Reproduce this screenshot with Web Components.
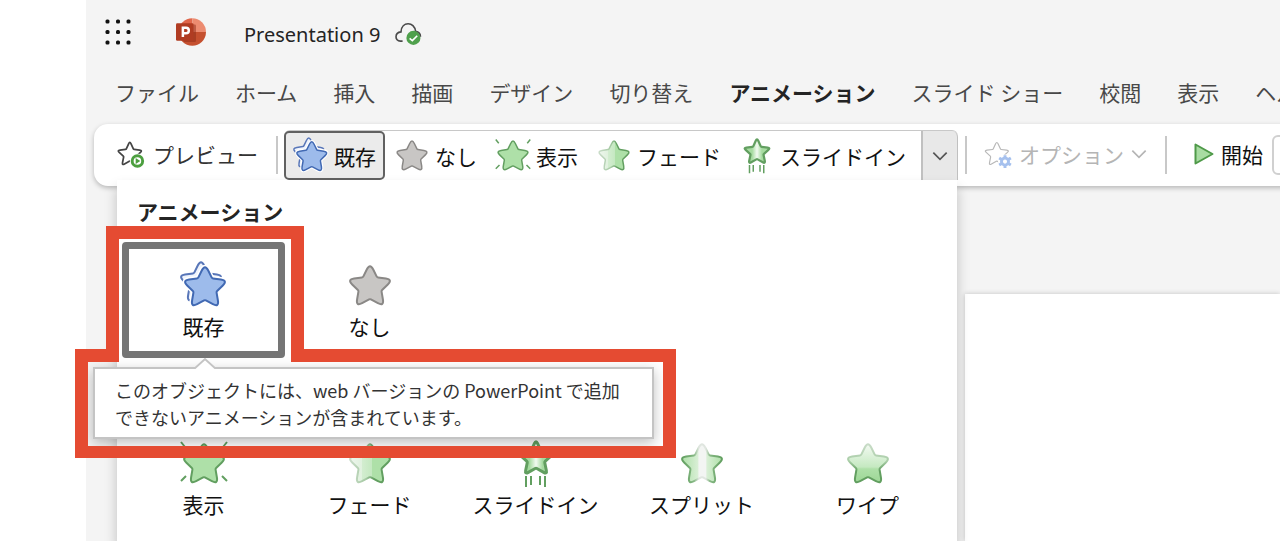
<!DOCTYPE html>
<html lang="ja">
<head>
<meta charset="utf-8">
<meta name="viewport" content="width=device-width, initial-scale=1">
<title>Presentation 9</title>
<style>
  body {
    margin: 0;
    background: #fff;
    color: #242424;
    font-family: "Noto Sans CJK JP", sans-serif;
    font-size: 21px;
  }
</style>
</head>
<body>
<slide-app></slide-app>

<script>
// Path of a five-pointed star with rounded tips.
function starPath(cx, cy, outer, inner, round) {
  const pts = [];
  for (let i = 0; i < 10; i++) {
    const r = i % 2 ? inner : outer;
    const a = -Math.PI / 2 + (i * Math.PI) / 5;
    pts.push([cx + r * Math.cos(a), cy + r * Math.sin(a)]);
  }
  const toward = (p, q, d) => {
    const len = Math.hypot(q[0] - p[0], q[1] - p[1]);
    return [p[0] + ((q[0] - p[0]) * d) / len, p[1] + ((q[1] - p[1]) * d) / len];
  };
  const f = (p) => p.map((n) => n.toFixed(2)).join(" ");
  let d = "";
  pts.forEach((p, i) => {
    const cut = i % 2 ? 1 : round;
    const a = toward(p, pts[(i + 9) % 10], cut);
    const b = toward(p, pts[(i + 1) % 10], cut);
    d += `${i ? "L" : "M"}${f(a)} Q${f(p)} ${f(b)} `;
  });
  return d + "Z";
}

const STAR = starPath(24, 25, 24, 12, 7);
const SMALL_STAR = starPath(24, 19, 19, 9, 4);
const GREEN = "#629f60";
const LIGHT = "#aee0a8";

const gradient = (id, dir, stops) => `
  <linearGradient id="${id}" ${dir}>
    ${stops.map(([o, c]) => `<stop offset="${o}" stop-color="${c}"/>`).join("")}
  </linearGradient>`;

const ICONS = {
  existing: `
    <path d="${STAR}" transform="translate(-3 -4)" fill="#eef3fc" stroke="#5876b8" stroke-width="2"/>
    <path d="${STAR}" transform="translate(1 1)" fill="none" stroke="#fff" stroke-width="5"/>
    <path d="${STAR}" transform="translate(1 1)" fill="#9dbbeb" stroke="#4169b3" stroke-width="2"/>`,
  none: `<path d="${STAR}" fill="#c8c6c4" stroke="#8a8886" stroke-width="2"/>`,
  appear: `
    <path d="${STAR}" fill="${LIGHT}" stroke="${GREEN}" stroke-width="2"/>
    <path d="M1 2l4 5M47 2l-4 5M1 41l5-5M47 41l-5-5" fill="none" stroke="${GREEN}" stroke-width="2"/>`,
  fade: `
    <defs>
      ${gradient("f", "", [[0, "#eef6ed"], [0.3, "#e0f1de"], [0.3, "#d3edd0"], [0.55, "#c4e8c0"], [0.55, LIGHT], [1, LIGHT]])}
      ${gradient("s", "", [[0, "#c9dcc8"], [0.4, "#a5c9a3"], [0.6, GREEN], [1, GREEN]])}
    </defs>
    <path d="${STAR}" fill="url(#f)" stroke="url(#s)" stroke-width="2"/>`,
  flyin: `
    <defs>${gradient("f", "", [[0, LIGHT], [0.3, "#a5db9f"], [0.5, "#f2faf1"], [0.7, "#a5db9f"], [1, LIGHT]])}</defs>
    <path d="${SMALL_STAR}" fill="url(#f)" stroke="${GREEN}" stroke-width="3"/>
    <path d="M14 36v11M19 36v9M28 36v9M33 36v11" stroke="${GREEN}" stroke-width="2"/>`,
  split: `
    <defs>
      ${gradient("f", "", [[0, LIGHT], [0.4, "#d9efd6"], [0.42, "#f3f5f3"], [0.6, "#f3f5f3"], [0.62, "#d9efd6"], [1, LIGHT]])}
      ${gradient("s", "", [[0, GREEN], [0.3, "#86b884"], [0.42, "#e0e6e0"], [0.6, "#e0e6e0"], [0.7, "#86b884"], [1, GREEN]])}
    </defs>
    <path d="${STAR}" fill="url(#f)" stroke="url(#s)" stroke-width="2"/>`,
  wipe: `
    <defs>
      ${gradient("f", 'x2="0" y2="1"', [[0, "#f4faf3"], [0.6, "#c5e9c1"], [0.65, LIGHT], [1, "#9dd796"]])}
      ${gradient("s", 'x2="0" y2="1"', [[0, "#c9dcc8"], [0.45, "#a9cda7"], [0.7, GREEN], [1, GREEN]])}
    </defs>
    <path d="${STAR}" fill="url(#f)" stroke="url(#s)" stroke-width="2"/>`,
  preview: `
    <path d="${starPath(22, 25, 23, 11, 5)}" fill="#fff" stroke="#444" stroke-width="3"/>
    <circle cx="35" cy="36" r="13" fill="#fff"/>
    <circle cx="35" cy="36" r="9" fill="#fff" stroke="#4c9f3f" stroke-width="5"/>
    <path d="M32 31l8 5-8 5z" fill="#4c9f3f"/>`,
  options: `
    <path d="${starPath(22, 25, 23, 11, 5)}" fill="#fff" stroke="#b8b8b8" stroke-width="2"/>
    <circle cx="36" cy="37" r="12" fill="#fff"/>
    <circle cx="36" cy="37" r="6" fill="none" stroke="#a6c1ee" stroke-width="5"/>
    <path d="M36 26v5M36 43v5M26 31l5 3M41 40l5 3M46 31l-5 3M31 40l-5 3" stroke="#a6c1ee" stroke-width="5"/>`,
  play: `<path d="M9 5v38L43 24z" fill="#a8dca2" stroke="#4f9a49" stroke-width="4" stroke-linejoin="round"/>`,
  chevron: `<path d="M4 14l20 20 20-20" fill="none" stroke="currentColor" stroke-width="5"/>`,
  launcher: [3, 24, 45].map((y) => [3, 24, 45].map((x) =>
    `<rect x="${x - 4}" y="${y - 4}" width="8" height="8" rx="3" fill="#111"/>`).join("")).join(""),
  cloud: `
    <path d="M14 39H10C-1 39-1 23 11 22C12 2 36 2 38 21C46 22 47 28 47 31" fill="none" stroke="#4a4a4a" stroke-width="3"/>
    <circle cx="34" cy="33" r="13" fill="#4fa04c"/>
    <path d="M27 34l5 4 9-9" fill="none" stroke="#fff" stroke-width="3"/>`,
  powerpoint: `
    <path d="M26 2a22 22 0 0 0-22 22h22z" fill="#e0664a"/>
    <path d="M26 2a22 22 0 0 1 22 22l-11 4-11-4z" fill="#ec8b70"/>
    <path d="M4 24a22 22 0 0 0 44 0z" fill="#c5502f"/>
    <rect x="12" y="12" width="20" height="28" rx="2" fill="#8e2c17" opacity=".5"/>
    <rect x="0" y="10" width="28" height="28" rx="2" fill="#b03c22"/>
    <path d="M11 32V17h5a4 4 0 0 1 0 9h-5" fill="none" stroke="#fff" stroke-width="4"/>`
};

class AppIcon extends HTMLElement {
  connectedCallback() {
    const root = this.shadowRoot || this.attachShadow({ mode: "open" });
    root.innerHTML = `
      <style>
        :host {
          display: block;
          flex: none;
          width: var(--icon-size, 36px);
          height: var(--icon-size, 36px);
        }
        svg {
          display: block;
          width: 100%;
          height: 100%;
          overflow: visible;
        }
      </style>
      <svg viewBox="0 0 48 48" aria-hidden="true">${ICONS[this.getAttribute("name")] || ""}</svg>
    `;
  }
}

class TitleBar extends HTMLElement {
  connectedCallback() {
    const root = this.shadowRoot || this.attachShadow({ mode: "open" });
    root.innerHTML = `
      <style>
        :host {
          display: flex;
          align-items: center;
          height: 63px;
          padding-left: 20px;
        }
        button {
          padding: 0;
          border: 0;
          background: none;
        }
        .launcher { --icon-size: 24px; }
        .logo {
          --icon-size: 30px;
          margin-left: 46px;
        }
        h1 {
          margin: 6px 15px 0 38px;
          font: 400 20px/30px "Noto Sans", sans-serif;
          white-space: nowrap;
        }
        .cloud {
          --icon-size: 26px;
          margin-top: 3px;
        }
      </style>
      <button class="launcher" aria-label="アプリ起動ツール"><app-icon name="launcher"></app-icon></button>
      <app-icon class="logo" name="powerpoint"></app-icon>
      <h1><slot></slot></h1>
      <app-icon class="cloud" name="cloud"></app-icon>
    `;
  }
}

class RibbonTabs extends HTMLElement {
  connectedCallback() {
    const tabs = ["ファイル", "ホーム", "挿入", "描画", "デザイン", "切り替え", "アニメーション",
      "スライド ショー", "校閲", "表示", "ヘルプ"];
    const root = this.shadowRoot || this.attachShadow({ mode: "open" });
    root.innerHTML = `
      <style>
        :host {
          display: block;
          overflow: hidden;
        }
        nav {
          display: flex;
          gap: 36px;
          padding: 0 0 3px 29px;
        }
        button {
          flex: none;
          padding: 0;
          border: 0;
          background: none;
          color: #484848;
          font: inherit;
          line-height: 58px;
          white-space: nowrap;
        }
        button[aria-selected="true"] {
          color: #242424;
          font-weight: 700;
        }
      </style>
      <nav role="tablist">
        ${tabs.map((t) => `<button role="tab" aria-selected="${t === "アニメーション"}">${t}</button>`).join("")}
      </nav>
    `;
  }
}

class GalleryItem extends HTMLElement {
  connectedCallback() {
    const root = this.shadowRoot || this.attachShadow({ mode: "open" });
    root.innerHTML = `
      <style>
        :host { display: flex; }
        button {
          display: flex;
          align-items: center;
          gap: 5px;
          padding: 0 8px;
          border: 1px solid transparent;
          border-radius: 5px;
          background: none;
          color: #111;
          font: inherit;
          white-space: nowrap;
        }
        :host([selected]) button {
          padding: 0 7px;
          border: 2px solid #616161;
          background: #ebebeb;
        }
      </style>
      <button><app-icon name="${this.getAttribute("icon")}"></app-icon><slot></slot></button>
    `;
  }
}

class RibbonBar extends HTMLElement {
  connectedCallback() {
    const root = this.shadowRoot || this.attachShadow({ mode: "open" });
    root.innerHTML = `
      <style>
        :host {
          display: flex;
          height: 62px;
          margin: 0 -20px 0 8px;
          padding-left: 23px;
          border-radius: 14px;
          background: #fff;
          box-shadow: 0 2px 5px rgba(0, 0, 0, 0.25);
          box-sizing: border-box;
          line-height: 30px;
          white-space: nowrap;
        }
        .tool, label {
          display: flex;
          flex: none;
          align-items: center;
          gap: 8px;
          padding: 0 0 2px;
          border: 0;
          background: none;
          color: #333;
          font: inherit;
        }
        .tool { --icon-size: 28px; }
        .tool:disabled {
          gap: 7px;
          color: #b5b5b5;
        }
        .small { --icon-size: 16px; }
        i {
          flex: none;
          width: 2px;
          height: 38px;
          margin-top: 12px;
          background: #c8c8c8;
        }
        .gallery {
          display: flex;
          flex: none;
          height: 50px;
          margin: 6px 7px 0 6px;
          border-top: 1px solid #c8c8c8;
          border-radius: 6px;
          box-sizing: border-box;
        }
        .more {
          --icon-size: 16px;
          display: flex;
          align-items: center;
          justify-content: center;
          width: 37px;
          margin-left: 6px;
          padding: 0;
          border: 1px solid #c0c0c0;
          border-width: 0 1px 0 2px;
          border-radius: 0 6px 0 0;
          background: #e8e8e8;
          color: #555;
        }
        label {
          --icon-size: 24px;
          gap: 6px;
          margin: 0 9px 0 24px;
          color: #111;
        }
        select {
          width: 160px;
          height: 40px;
          margin-top: 11px;
          border: 2px solid #d0d0d0;
          border-radius: 6px;
          background: #fff;
          font: inherit;
        }
      </style>
      <button class="tool"><app-icon name="preview"></app-icon>プレビュー</button>
      <i style="margin-left: 18px"></i>
      <div class="gallery">
        <gallery-item icon="existing" selected>既存</gallery-item>
        <gallery-item icon="none">なし</gallery-item>
        <gallery-item icon="appear">表示</gallery-item>
        <gallery-item icon="fade">フェード</gallery-item>
        <gallery-item icon="flyin">スライドイン</gallery-item>
        <button class="more" aria-label="アニメーションの一覧" aria-expanded="true"><app-icon name="chevron"></app-icon></button>
      </div>
      <i style="margin-right: 17px"></i>
      <button class="tool" disabled>
        <app-icon name="options"></app-icon>オプション<app-icon class="small" name="chevron"></app-icon>
      </button>
      <i style="margin-left: 18px"></i>
      <label for="start"><app-icon name="play"></app-icon>開始</label>
      <select id="start"></select>
    `;
  }
}

class EffectTile extends HTMLElement {
  connectedCallback() {
    const root = this.shadowRoot || this.attachShadow({ mode: "open" });
    root.innerHTML = `
      <style>
        :host {
          display: block;
          position: relative;
        }
        button {
          --icon-size: 48px;
          display: flex;
          flex-direction: column;
          align-items: center;
          gap: 2px;
          width: 100%;
          height: 116px;
          padding: 13px 0 0;
          border: 7px solid transparent;
          border-radius: 4px;
          background: none;
          color: #111;
          font: inherit;
          line-height: 28px;
          white-space: nowrap;
        }
        :host([selected]) button { border-color: #757575; }
      </style>
      <button><app-icon name="${this.getAttribute("icon")}"></app-icon><slot></slot></button>
      <slot name="tip"></slot>
    `;
  }
}

class EffectTip extends HTMLElement {
  connectedCallback() {
    const root = this.shadowRoot || this.attachShadow({ mode: "open" });
    root.innerHTML = `
      <style>
        :host {
          position: absolute;
          z-index: 2;
          top: 125px;
          left: -29px;
          padding: 8px 32px 6px 20px;
          border: 2px solid #c4c4c4;
          background: #fff;
          box-shadow: 0 4px 12px rgba(0, 0, 0, 0.25);
          color: #333;
          font-size: 18px;
          line-height: 27px;
          white-space: nowrap;
        }
        svg {
          position: absolute;
          top: -12px;
          left: 99px;
        }
      </style>
      <svg width="22" height="12" viewBox="0 0 22 12" aria-hidden="true">
        <path d="M0 12L11 2L22 12" fill="#fff" stroke="#c4c4c4" stroke-width="2"/>
      </svg>
      <slot></slot>
    `;
  }
}

class EffectPanel extends HTMLElement {
  connectedCallback() {
    const root = this.shadowRoot || this.attachShadow({ mode: "open" });
    root.innerHTML = `
      <style>
        :host {
          display: block;
          padding: 14px 8px 0 5px;
          background: #fff;
          box-shadow: 0 8px 12px rgba(0, 0, 0, 0.22);
        }
        h2 {
          margin: 0 0 14px 15px;
          font-size: 21px;
          line-height: 34px;
        }
        .row {
          display: grid;
          grid-template-columns: repeat(5, 163px);
          gap: 3px;
        }
        .row + .row { margin-top: 62px; }
      </style>
      <h2>アニメーション</h2>
      <div class="row">
        <effect-tile icon="existing" selected>既存
          <effect-tip slot="tip" role="tooltip">このオブジェクトには、web バージョンの PowerPoint で追加<br>できないアニメーションが含まれています。</effect-tip>
        </effect-tile>
        <effect-tile icon="none">なし</effect-tile>
      </div>
      <div class="row">
        <effect-tile icon="appear">表示</effect-tile>
        <effect-tile icon="fade">フェード</effect-tile>
        <effect-tile icon="flyin">スライドイン</effect-tile>
        <effect-tile icon="split">スプリット</effect-tile>
        <effect-tile icon="wipe">ワイプ</effect-tile>
      </div>
    `;
  }
}

// Red frame round the selected effect and its tooltip.
class CalloutFrame extends HTMLElement {
  connectedCallback() {
    const root = this.shadowRoot || this.attachShadow({ mode: "open" });
    root.innerHTML = `
      <style>
        :host {
          display: block;
          pointer-events: none;
        }
        svg { display: block; }
      </style>
      <svg width="601" height="232" viewBox="0 0 601 232" aria-hidden="true">
        <path fill="#e54b32" fill-rule="evenodd"
          d="M31 0H229V123H601V232H0V123H31Z M44 13V136H13V220H588V136H216V13Z"/>
      </svg>
    `;
  }
}

class SlideApp extends HTMLElement {
  connectedCallback() {
    const root = this.shadowRoot || this.attachShadow({ mode: "open" });
    root.innerHTML = `
      <style>
        :host {
          display: block;
          overflow: hidden;
        }
        .window {
          display: flex;
          flex-direction: column;
          position: relative;
          min-height: 100vh;
          margin-left: 86px;
          background: #f4f4f4;
        }
        .stage {
          display: flex;
          flex: 1;
          padding: 108px 0 0 879px;
        }
        .slide {
          flex: 1;
          background: #fff;
          box-shadow: 0 0 5px rgba(0, 0, 0, 0.2);
        }
        effect-panel {
          position: absolute;
          top: 180px;
          bottom: 0;
          left: 31px;
        }
        callout-frame {
          position: absolute;
          top: 226px;
          left: -11px;
          z-index: 3;
        }
      </style>
      <div class="window">
        <title-bar>Presentation 9</title-bar>
        <ribbon-tabs></ribbon-tabs>
        <ribbon-bar></ribbon-bar>
        <main class="stage"><div class="slide"></div></main>
        <effect-panel></effect-panel>
        <callout-frame></callout-frame>
      </div>
    `;
  }
}

customElements.define("app-icon", AppIcon);
customElements.define("title-bar", TitleBar);
customElements.define("ribbon-tabs", RibbonTabs);
customElements.define("gallery-item", GalleryItem);
customElements.define("ribbon-bar", RibbonBar);
customElements.define("effect-tile", EffectTile);
customElements.define("effect-tip", EffectTip);
customElements.define("effect-panel", EffectPanel);
customElements.define("callout-frame", CalloutFrame);
customElements.define("slide-app", SlideApp);
</script>
</body>
</html>
